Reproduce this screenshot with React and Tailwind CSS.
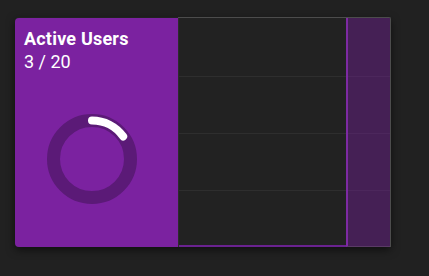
import React from "react";

function Donut() {
  const r = 38.5;
  const c = 2 * Math.PI * r;
  const frac = 3 / 20;
  return (
    <svg width="90" height="90" viewBox="0 0 90 90" className="block">
      <circle cx="45" cy="45" r={r} fill="none" stroke="#5b1a77" strokeWidth="13" />
      <circle
        cx="45"
        cy="45"
        r={r}
        fill="none"
        stroke="#ffffff"
        strokeWidth="8"
        strokeLinecap="round"
        strokeDasharray={`${c * frac} ${c}`}
        transform="rotate(-90 45 45)"
      />
    </svg>
  );
}

export default function App() {
  return (
    <div className="w-[429px] h-[276px] bg-[#212121] pt-[17px] pl-[15px]" style={{ fontFamily: "Roboto, 'Noto Sans', sans-serif" }}>
      <div className="flex w-[376px] h-[230px] shadow-[0_3px_8px_rgba(0,0,0,0.55)] rounded-[4px]">
        <div className="mt-px w-[163px] h-[229px] bg-[#7b22a0] rounded-l-[4px] pl-[9px] pt-[9px] text-white">
          <div className="text-[18px] leading-[23px] font-bold tracking-[0.2px]">Active Users</div>
          <div className="text-[18px] leading-[23px] text-white">3 / 20</div>
          <div className="mt-[41px] ml-[23px]">
            <Donut />
          </div>
        </div>
        <div className="relative flex-1 h-[230px] bg-[#222222] border-t border-r border-[#4c4c4c] rounded-tr-[2px]">
          <div className="flex flex-col h-[229px] border-l border-[#2c2c2c]">
            <div className="h-[59px] border-b border-[#2e2e2e]" />
            <div className="h-[57px] border-b border-[#2e2e2e]" />
            <div className="h-[57px] border-b border-[#2e2e2e]" />
            <div className="flex-1 border-b-2 border-[#6a2290] mr-[44px]" />
          </div>
          <div className="absolute right-0 top-0 bottom-0 w-[44px] bg-[#7b1fa2]/40 border-l-2 border-[#7d2aa3] border-b border-b-[#5a3a66]" />
        </div>
      </div>
    </div>
  );
}
